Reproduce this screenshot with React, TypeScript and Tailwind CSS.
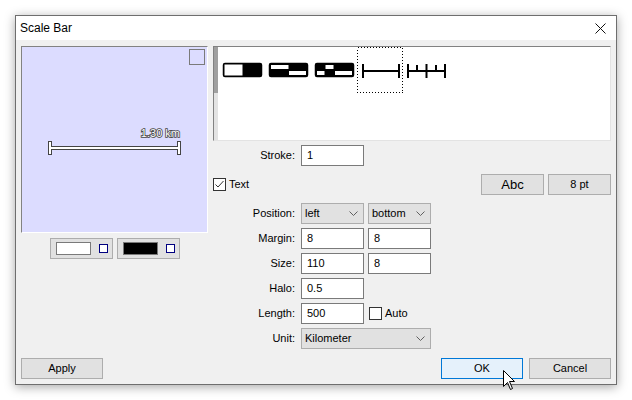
import type { ReactNode } from 'react'

function Label({ children }: { children: ReactNode }) {
  return <div className="w-[83px] text-right pr-[1px]">{children}</div>
}

function Field({ value, w = 'w-[63px]' }: { value: string; w?: string }) {
  return (
    <div className={`${w} h-[21px] bg-white border border-[#7a7a7a] pl-[5px] flex items-center`}>
      {value}
    </div>
  )
}

function Chevron() {
  return (
    <svg width="9" height="5" viewBox="0 0 9 5" className="shrink-0">
      <path d="M0.5 0.5 L4.5 4.5 L8.5 0.5" fill="none" stroke="#606060" strokeWidth="1" />
    </svg>
  )
}

function Select({ value, w = 'w-[63px]' }: { value: string; w?: string }) {
  return (
    <div
      className={`${w} h-[21px] bg-[#e1e1e1] border border-[#adadad] pl-[3px] pr-[5px] flex items-center justify-between`}
    >
      <span>{value}</span>
      <Chevron />
    </div>
  )
}

function Checkbox({ checked }: { checked?: boolean }) {
  return (
    <div className="w-[13px] h-[13px] bg-white border border-[#333] shrink-0">
      {checked && (
        <svg width="11" height="11" viewBox="0 0 11 11">
          <path d="M1.5 5.5 L4 8 L9.5 2" fill="none" stroke="#333" strokeWidth="1" />
        </svg>
      )}
    </div>
  )
}

function Button({ children, primary, className = '' }: { children: ReactNode; primary?: boolean; className?: string }) {
  return (
    <div
      className={`w-[82px] h-[21px] flex items-center justify-center border ${
        primary ? 'bg-[#e5f1fb] border-[#0078d7]' : 'bg-[#e1e1e1] border-[#adadad]'
      } ${className}`}
    >
      {children}
    </div>
  )
}

function Swatch({ fill }: { fill: string }) {
  return (
    <div className="w-[63px] h-[21px] bg-[#e1e1e1] border border-[#adadad] pl-[5px] flex items-center">
      <div className={`w-[35px] h-[13px] border border-[#7a7a7a] ${fill}`} />
      <div className="ml-[8px] w-[9px] h-[9px] border border-[#000080] bg-white" />
    </div>
  )
}

function Preview() {
  return (
    <div className="w-[187px] h-[187px] border border-t-[#828282] border-l-[#828282] border-r-white border-b-white bg-[#dcdcff]">
      <svg width="185" height="185" viewBox="0 0 185 185">
        <rect x="167.5" y="2.5" width="15" height="15" fill="none" stroke="#7a7a7a" />
        <line x1="27" y1="101" x2="158" y2="101" stroke="#444" strokeWidth="4" />
        <line x1="28" y1="94" x2="28" y2="108" stroke="#444" strokeWidth="4" />
        <line x1="157" y1="94" x2="157" y2="108" stroke="#444" strokeWidth="4" />
        <line x1="28" y1="101" x2="157" y2="101" stroke="#fff" strokeWidth="2" />
        <line x1="28" y1="95" x2="28" y2="107" stroke="#fff" strokeWidth="2" />
        <line x1="157" y1="95" x2="157" y2="107" stroke="#fff" strokeWidth="2" />
        <text
          x="158"
          y="90"
          textAnchor="end"
          fontFamily="Liberation Sans, sans-serif"
          fontSize="11"
          fill="#fff"
          stroke="#444"
          strokeWidth="1.6"
          paintOrder="stroke"
        >
          1.30 km
        </text>
      </svg>
    </div>
  )
}

function StyleList() {
  return (
    <div className="h-[95px] flex border border-t-[#828282] border-l-[#828282] border-r-[#e3e3e3] border-b-[#e3e3e3] bg-white">
      <div className="w-[4px] bg-[#e3e3e3]">
        <div className="h-[46px] bg-[#a0a0a0]" />
      </div>
      <svg width="392" height="93" viewBox="0 0 392 93">
        {/* alternating */}
        <rect x="5.5" y="16.5" width="38" height="13" rx="1.5" fill="#000" stroke="#000" strokeWidth="1.5" />
        <rect x="6.5" y="17.5" width="18" height="11" fill="#fff" />
        {/* double */}
        <rect x="51.5" y="16.5" width="38" height="13" rx="1.5" fill="#000" stroke="#000" strokeWidth="1.5" />
        <rect x="53" y="18" width="17.5" height="4" fill="#fff" />
        <rect x="71" y="24" width="17" height="4" fill="#fff" />
        {/* alternating double */}
        <rect x="97.5" y="16.5" width="38" height="13" rx="1.5" fill="#000" stroke="#000" strokeWidth="1.5" />
        <rect x="107.5" y="18" width="8" height="4" fill="#fff" />
        <rect x="99" y="24" width="7.5" height="4" fill="#fff" />
        <rect x="117" y="24" width="17" height="4" fill="#fff" />
        {/* selected line */}
        <rect
          x="139.5"
          y="0.5"
          width="45"
          height="45"
          fill="none"
          stroke="#000"
          strokeDasharray="1 2"
          shapeRendering="crispEdges"
        />
        <line x1="145" y1="24" x2="181" y2="24" stroke="#000" strokeWidth="2" />
        <line x1="145" y1="17" x2="145" y2="31" stroke="#000" strokeWidth="2" />
        <line x1="181" y1="17" x2="181" y2="31" stroke="#000" strokeWidth="2" />
        {/* ticks */}
        <line x1="190" y1="24" x2="227" y2="24" stroke="#000" strokeWidth="2" />
        <line x1="190" y1="17" x2="190" y2="31" stroke="#000" strokeWidth="2" />
        <line x1="208.5" y1="17" x2="208.5" y2="31" stroke="#000" strokeWidth="2" />
        <line x1="227" y1="17" x2="227" y2="31" stroke="#000" strokeWidth="2" />
        <line x1="199" y1="18" x2="199" y2="24" stroke="#000" strokeWidth="2" />
        <line x1="218" y1="18" x2="218" y2="24" stroke="#000" strokeWidth="2" />
      </svg>
    </div>
  )
}

export default function App() {
  return (
    <div className="w-[632px] h-[400px] bg-white relative overflow-hidden pt-[15px] pl-[15px] font-['Liberation_Sans',sans-serif] text-[11px] text-black">
      <div className="w-[602px] h-[370px] border border-[#6e6e6e] bg-[#f0f0f0] shadow-[0_2px_10px_rgba(0,0,0,0.35)] flex flex-col">
        <div className="h-[24px] bg-white flex items-center justify-between pl-[4px] pr-[10px]">
          <span className="text-[12px]">Scale Bar</span>
          <svg width="11" height="11" viewBox="0 0 11 11">
            <path d="M0.5 0.5 L10.5 10.5 M10.5 0.5 L0.5 10.5" stroke="#111" strokeWidth="1" />
          </svg>
        </div>

        <div className="flex-1 flex flex-col px-[5px] pt-[6px]">
          <div className="flex gap-[5px]">
            <div className="w-[187px] flex flex-col items-center gap-[5px]">
              <Preview />
              <div className="flex gap-[4px]">
                <Swatch fill="bg-white" />
                <Swatch fill="bg-black" />
              </div>
            </div>

            <div className="w-[398px] flex flex-col">
              <StyleList />

              <div className="mt-[4px] h-[21px] flex items-center gap-[5px]">
                <Label>Stroke:</Label>
                <Field value="1" />
              </div>

              <div className="mt-[8px] h-[21px] flex items-center">
                <Checkbox checked />
                <span className="ml-[3px]">Text</span>
                <div className="ml-auto flex gap-[4px]">
                  <div className="w-[63px] h-[21px] bg-[#e1e1e1] border border-[#adadad] flex items-center justify-center text-[13px]">
                    Abc
                  </div>
                  <div className="w-[63px] h-[21px] bg-[#e1e1e1] border border-[#adadad] flex items-center justify-center">
                    8 pt
                  </div>
                </div>
              </div>

              <div className="mt-[8px] h-[21px] flex items-center gap-[5px]">
                <Label>Position:</Label>
                <div className="flex gap-[4px]">
                  <Select value="left" />
                  <Select value="bottom" />
                </div>
              </div>

              <div className="mt-[4px] h-[21px] flex items-center gap-[5px]">
                <Label>Margin:</Label>
                <div className="flex gap-[4px]">
                  <Field value="8" />
                  <Field value="8" />
                </div>
              </div>

              <div className="mt-[4px] h-[21px] flex items-center gap-[5px]">
                <Label>Size:</Label>
                <div className="flex gap-[4px]">
                  <Field value="110" />
                  <Field value="8" />
                </div>
              </div>

              <div className="mt-[4px] h-[21px] flex items-center gap-[5px]">
                <Label>Halo:</Label>
                <Field value="0.5" />
              </div>

              <div className="mt-[4px] h-[21px] flex items-center gap-[5px]">
                <Label>Length:</Label>
                <Field value="500" />
                <Checkbox />
                <span className="-ml-[2px]">Auto</span>
              </div>

              <div className="mt-[4px] h-[21px] flex items-center gap-[5px]">
                <Label>Unit:</Label>
                <Select value="Kilometer" w="w-[130px]" />
              </div>
            </div>
          </div>

          <div className="mt-[9px] flex h-[21px]">
            <Button>Apply</Button>
            <Button primary className="ml-auto">
              OK
            </Button>
            <Button className="ml-[6px]">Cancel</Button>
          </div>
        </div>
      </div>

      <svg className="absolute left-[503px] top-[370px]" width="13" height="21" viewBox="0 0 13 21">
        <path
          d="M0.5 0.5 L0.5 16.5 L4.5 12.5 L7.5 19.5 L9.5 18.5 L6.5 11.5 L11.5 11.5 Z"
          fill="#fff"
          stroke="#000"
          strokeWidth="1"
          strokeLinejoin="round"
        />
      </svg>
    </div>
  )
}
